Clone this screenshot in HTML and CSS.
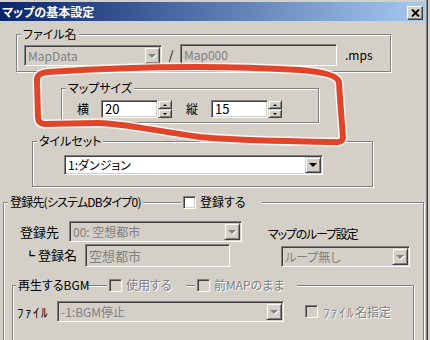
FILE: index.html
```html
<!DOCTYPE html>
<html lang="ja">
<head>
  <meta charset="UTF-8" />
  <title>マップの基本設定</title>
  <link rel="stylesheet" href="styles.css">
</head>
<body>
  <div class="window">
    <div class="titlebar">
      <span class="title">マップの基本設定</span>
      <span class="close-btn">
        <svg width="9" height="8" viewBox="0 0 9 8"><path d="M1 0.5L8 7.5M8 0.5L1 7.5" stroke="#000" stroke-width="1.8"/></svg>
      </span>
    </div>

    <!-- ファイル名 -->
    <div class="group g-file">
      <div class="group-head"><span class="cap">ファイル名</span></div>
      <div class="row file-row">
        <div class="combo sunken disabled w-mapdata">
          <span class="combo-text">MapData</span>
          <span class="drop"><i class="tri"></i></span>
        </div>
        <span class="slash">/</span>
        <div class="edit sunken disabled w-map000">Map000</div>
        <span class="ext">.mps</span>
      </div>
    </div>

    <!-- マップサイズ -->
    <div class="group g-size">
      <div class="group-head"><span class="cap">マップサイズ</span></div>
      <div class="row size-row">
        <span class="lbl-w">横</span>
        <div class="edit sunken num">20</div>
        <div class="spin"><span><i class="tri-up"></i></span><span><i class="tri-sm"></i></span></div>
        <span class="lbl-h">縦</span>
        <div class="edit sunken num">15</div>
        <div class="spin"><span><i class="tri-up"></i></span><span><i class="tri-sm"></i></span></div>
      </div>
    </div>

    <!-- タイルセット -->
    <div class="group g-tile">
      <div class="group-head"><span class="cap">タイルセット</span></div>
      <div class="row tile-row">
        <div class="combo sunken w-tile">
          <span class="combo-text">1:ダンジョン</span>
          <span class="drop"><i class="tri"></i></span>
        </div>
      </div>
    </div>

    <!-- 登録先 -->
    <div class="group g-reg">
      <div class="group-head">
        <span class="cap reg-cap1">登録先(システムDBタイプ0)</span>
        <span class="cap check-cap reg-cap2"><i class="check"></i><span class="check-label">登録する</span></span>
      </div>
      <div class="reg-grid">
        <div class="reg-left">
          <div class="reg-row">
            <span class="lbl-reg">登録先</span>
            <div class="combo sunken disabled w-reg">
              <span class="combo-text">00: 空想都市</span>
              <span class="drop"><i class="tri"></i></span>
            </div>
          </div>
          <div class="reg-row reg-row2">
            <span class="lbl-name"><span class="corner">┗</span> 登録名</span>
            <div class="edit sunken disabled w-name">空想都市</div>
          </div>
        </div>
        <div class="reg-right">
          <span class="lbl-loop">マップのループ設定</span>
          <div class="combo sunken disabled w-loop">
            <span class="combo-text">ループ無し</span>
            <span class="drop"><i class="tri"></i></span>
          </div>
        </div>
      </div>

      <!-- 再生するBGM -->
      <div class="group g-bgm">
        <div class="group-head">
          <span class="cap bgm-cap1">再生するBGM</span>
          <span class="cap check-cap bgm-cap2"><i class="check off"></i><span class="check-label dis">使用する</span></span>
          <span class="cap check-cap bgm-cap3"><i class="check off"></i><span class="check-label dis">前MAPのまま</span></span>
        </div>
        <div class="row bgm-row">
          <span class="lbl-file hw">ﾌｧｲﾙ</span>
          <div class="combo sunken disabled w-bgm">
            <span class="combo-text">-1:BGM停止</span>
            <span class="drop"><i class="tri"></i></span>
          </div>
          <i class="check off bgm-check"></i>
          <span class="check-label dis"><span class="hw">ﾌｧｲﾙ</span>名指定</span>
        </div>
      </div>
    </div>
  </div>

  <!-- red pen markup drawn over the screenshot -->
  <svg class="markup" width="430" height="340" viewBox="0 0 430 340">
    <path class="halo" d="M37 81 Q36 73 48 72 C110 68 200 64 300 70 Q337 73 339 82 C340 100 342 124 343 137 Q343 143 334 142 C290 141 240 141 200 137 C150 130 120 123 98 123 L45 124 Q38 124 38 117 Z"/>
    <path class="pen" d="M37 81 Q36 73 48 72 C110 68 200 64 300 70 Q337 73 339 82 C340 100 342 124 343 137 Q343 143 334 142 C290 141 240 141 200 137 C150 130 120 123 98 123 L45 124 Q38 124 38 117 Z"/>
  </svg>
</body>
</html>
```

FILE: styles.css
```css
* {
  box-sizing: border-box;
}

body {
  margin: 0;
  width: 430px;
  height: 340px;
  overflow: hidden;
  position: relative;
  background: #d4d0c8;
  color: #000;
  font: 12px/14px "Noto Sans CJK JP", sans-serif;
  font-feature-settings: "palt";
}

i {
  display: block;
}

.window {
  width: 428px;
  height: 340px;
  overflow: hidden;
  padding: 2px 2px 0 0;
  border-right: 1px solid #404040;
  box-shadow: inset -1px 0 #808080;
}

.titlebar {
  height: 19px;
  display: flex;
  align-items: center;
  justify-content: space-between;
  padding: 0 2px 0 2px;
  background: linear-gradient(to right, #0a246a, #a6caf0);
}

.title {
  color: #fff;
  font-weight: bold;
}

.close-btn {
  width: 16px;
  height: 14px;
  margin-top: 3px;
  display: flex;
  align-items: center;
  justify-content: center;
  background: #d4d0c8;
  border: 1px solid;
  border-color: #fff #404040 #404040 #fff;
  box-shadow: inset -1px -1px #808080;
}

/* group boxes */
.group {
  border: 1px solid #808080;
  box-shadow: inset 1px 1px #fff, 1px 1px #fff;
}

.group-head {
  display: flex;
  height: 14px;
  margin: -8px 0 0 4px;
}

.cap {
  background: #d4d0c8;
  padding: 0 2px;
  white-space: nowrap;
}

.check-cap {
  display: flex;
  align-items: center;
}

.row {
  display: flex;
  align-items: center;
}

/* half-width katakana */
.hw {
  font-feature-settings: normal;
  font-size: 13px;
  letter-spacing: 1.5px;
}

/* sunken field */
.sunken {
  border: 1px solid;
  border-color: #808080 #fff #fff #808080;
  box-shadow: inset 1px 1px #404040, inset -1px -1px #d4d0c8;
  padding: 1px;
  background: #fff;
}

.sunken.disabled {
  background: #d4d0c8;
  color: #808080;
}

.combo {
  display: flex;
  height: 21px;
}

.combo-text {
  flex: 1;
  padding-left: 2px;
  align-self: center;
  white-space: nowrap;
}

.drop,
.spin span {
  display: flex;
  align-items: center;
  justify-content: center;
  background: #d4d0c8;
  border: 1px solid;
  border-color: #d4d0c8 #404040 #404040 #d4d0c8;
  box-shadow: inset 1px 1px #fff, inset -1px -1px #808080;
}

.drop {
  width: 16px;
}

.tri {
  width: 0;
  height: 0;
  border-left: 4px solid transparent;
  border-right: 4px solid transparent;
  border-top: 4px solid #000;
}

.disabled .tri {
  border-top-color: #808080;
  filter: drop-shadow(1px 1px 0 #fff);
}

.edit {
  display: flex;
  align-items: center;
  padding-left: 3px;
  white-space: nowrap;
}

.check {
  width: 13px;
  height: 13px;
  flex: none;
  border: 1px solid;
  border-color: #808080 #fff #fff #808080;
  box-shadow: inset 1px 1px #404040, inset -1px -1px #d4d0c8;
  background: #fff;
}

.check.off {
  background: #d4d0c8;
}

.check-label {
  margin-left: 4px;
  white-space: nowrap;
}

.dis {
  color: #808080;
  text-shadow: 1px 1px #fff;
}

/* ファイル名 */
.g-file {
  margin: 13px 0 0 16px;
  width: 375px;
  padding-bottom: 5px;
}

.file-row {
  margin-top: 3px;
  padding-left: 7px;
  align-items: flex-end;
}

.w-mapdata {
  width: 138px;
}

.slash {
  width: 18px;
  text-align: center;
  align-self: center;
}

.w-map000 {
  width: 157px;
  height: 22px;
}

.ext {
  margin-left: 8px;
  align-self: center;
}

/* マップサイズ */
.g-size {
  margin: 16px 0 0 61px;
  width: 258px;
  padding-bottom: 4px;
}

.size-row {
  margin-top: 5px;
  padding-left: 15px;
}

.lbl-w {
  width: 24px;
}

.lbl-h {
  width: 25px;
  margin-left: 14px;
}

.num {
  width: 57px;
  height: 18px;
  font-size: 13px;
}

.spin {
  width: 14px;
  height: 18px;
  display: flex;
  flex-direction: column;
}

.spin span {
  flex: 1;
}

.tri-up,
.tri-sm {
  width: 0;
  height: 0;
  border-left: 2px solid transparent;
  border-right: 2px solid transparent;
}

.tri-up {
  border-bottom: 2px solid #000;
}

.tri-sm {
  border-top: 2px solid #000;
}

/* タイルセット */
.g-tile {
  margin: 18px 0 0 32px;
  width: 341px;
  padding-bottom: 11px;
}

.tile-row {
  margin-top: 7px;
  padding-left: 31px;
}

.w-tile {
  width: 259px;
  height: 20px;
}

/* 登録先 (runs on past the bottom of the window) */
.g-reg {
  margin: 15px 0 0 3px;
  width: 421px;
  height: 170px;
}

.reg-cap1 {
  width: 135px;
  letter-spacing: -0.8px;
}

.reg-cap2 {
  margin-left: 38px;
  width: 81px;
}

.reg-grid {
  display: flex;
  align-items: flex-start;
  margin-top: 12px;
  padding-left: 16px;
}

.reg-left {
  width: 222px;
}

.reg-row {
  display: flex;
  align-items: center;
}

.reg-row2 {
  margin-top: 2px;
}

.lbl-reg {
  width: 49px;
  font-size: 13px;
}

.w-reg {
  width: 173px;
}

.lbl-name {
  width: 65px;
  padding-left: 5px;
  font-size: 13px;
}

.corner {
  font-weight: bold;
  font-size: 10px;
}

.w-name {
  width: 145px;
  height: 23px;
  font-size: 13px;
}

.reg-right {
  margin: 6px 0 0 26px;
  display: flex;
  flex-direction: column;
}

.lbl-loop {
  letter-spacing: -1.2px;
}

.w-loop {
  width: 129px;
  margin: 5px 0 0 13px;
}

/* 再生するBGM */
.g-bgm {
  margin: 18px 0 0 8px;
  width: 402px;
  height: 80px;
}

.g-bgm .group-head {
  margin-left: 3px;
}

.bgm-cap1 {
  width: 72px;
}

.bgm-cap2 {
  margin-left: 19px;
  width: 79px;
}

.bgm-cap3 {
  margin-left: 9px;
  width: 102px;
}

.bgm-row {
  margin-top: 9px;
  padding-left: 4px;
}

.lbl-file {
  width: 40px;
}

.w-bgm {
  width: 227px;
}

.bgm-check {
  margin-left: 21px;
}

.bgm-row .check-label {
  margin-left: 5px;
}

/* red pen */
.markup {
  position: absolute;
  top: 0;
  left: 0;
  pointer-events: none;
}

.markup path {
  fill: none;
  stroke-linejoin: round;
}

.halo {
  stroke: #fff;
  stroke-width: 9;
  opacity: 0.8;
}

.pen {
  stroke: #e0452a;
  stroke-width: 6;
}
```
